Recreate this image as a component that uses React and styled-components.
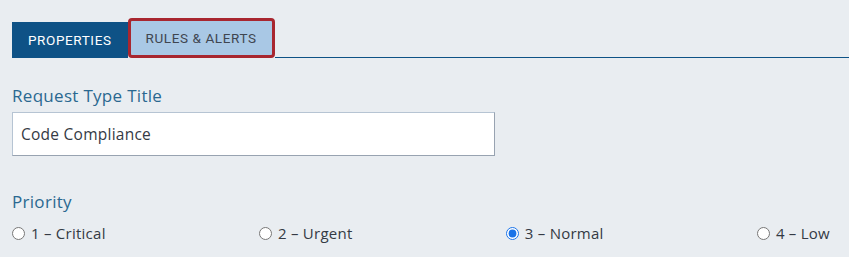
import React from 'react';
import styled, { createGlobalStyle } from 'styled-components';

const GlobalStyle = createGlobalStyle`
  html, body {
    margin: 0;
    padding: 0;
    background: #e9edf1;
  }
  body {
    font-family: "Open Sans", "Noto Sans", Arial, sans-serif;
  }
`;

const Page = styled.div`
  width: 849px;
  height: 257px;
  box-sizing: border-box;
  padding: 18px 0 0 12px;
  background: #e9edf1;
  overflow: hidden;
`;

const TabBar = styled.div`
  display: flex;
  align-items: flex-end;
  height: 40px;
`;

const Tab = styled.button`
  box-sizing: border-box;
  height: ${p => (p.focused ? '40px' : '36px')};
  padding: 0 ${p => (p.focused ? '15px' : '16px')};
  margin: 0;
  border: ${p => (p.focused ? '3px solid #a8262f' : 'none')};
  border-radius: ${p => (p.focused ? '4px' : '0')};
  background: ${p => (p.active ? '#0e5286' : '#a9c8e5')};
  color: ${p => (p.active ? '#ffffff' : '#3f4650')};
  font-family: Roboto, "Noto Sans", Arial, sans-serif;
  font-size: 13.5px;
  letter-spacing: 0.6px;
  font-weight: 400;
  text-transform: uppercase;
  cursor: pointer;
`;

const TabLine = styled.div`
  flex: 1;
  height: 1px;
  background: #0e5286;
`;

const Field = styled.div`
  display: flex;
  flex-direction: column;
  margin-top: ${p => p.top}px;
`;

const Label = styled.label`
  color: #2a6890;
  font-size: 17px;
  letter-spacing: 0.3px;
  line-height: 20px;
  margin-bottom: ${p => p.gap}px;
`;

const TextInput = styled.input`
  box-sizing: border-box;
  width: 483px;
  height: 44px;
  padding: 0 8px;
  border: 1px solid #b6c4d3;
  border-right-color: #98a3b1;
  border-bottom-color: #98a3b1;
  background: #fff;
  color: #343a44;
  font-family: "Open Sans", "Noto Sans", Arial, sans-serif;
  font-size: 15.5px;
  letter-spacing: 0.25px;
  outline: none;
`;

const RadioRow = styled.div`
  display: flex;
  justify-content: space-between;
  padding-right: 19px;
`;

const RadioOption = styled.label`
  display: flex;
  align-items: center;
  gap: 6px;
  color: #343a44;
  font-size: 15px;
  letter-spacing: 0.25px;
  line-height: 20px;
  cursor: pointer;
`;

const Radio = styled.input`
  margin: 0;
  width: 13px;
  height: 13px;
  accent-color: #1a73e8;
`;

const priorities = ['1 – Critical', '2 – Urgent', '3 – Normal', '4 – Low'];

const App = () => {
  return (
    <Page>
      <GlobalStyle />
      <TabBar>
        <Tab active>Properties</Tab>
        <Tab focused>Rules &amp; Alerts</Tab>
        <TabLine />
      </TabBar>
      <Field top={28}>
        <Label gap={6}>Request Type Title</Label>
        <TextInput defaultValue="Code Compliance" />
      </Field>
      <Field top={36}>
        <Label gap={11}>Priority</Label>
        <RadioRow>
          {priorities.map((p, i) => (
            <RadioOption key={p}>
              <Radio type="radio" name="priority" defaultChecked={i === 2} />
              {p}
            </RadioOption>
          ))}
        </RadioRow>
      </Field>
    </Page>
  );
};

export default App;
